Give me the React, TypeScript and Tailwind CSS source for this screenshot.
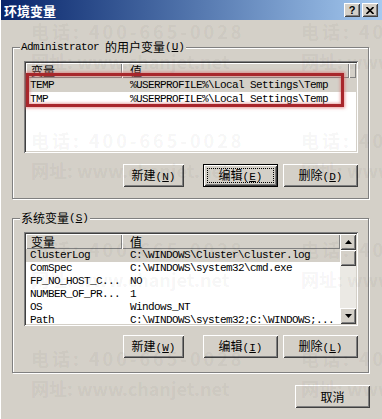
import React from "react";

const cjk = "font-['Noto_Sans_CJK_SC',sans-serif]";
const mono = "font-['Liberation_Mono','Noto_Sans_CJK_SC',monospace] text-[11px] tracking-[-0.6px]";
const raised =
  "shadow-[inset_1px_1px_#ffffff,inset_-1px_-1px_#404040,inset_2px_2px_#d4d0c8,inset_-2px_-2px_#808080]";
const sunken =
  "shadow-[inset_1px_1px_#808080,inset_-1px_-1px_#ffffff,inset_2px_2px_#404040,inset_-2px_-2px_#d4d0c8]";
const etched = "border border-[#808080] shadow-[inset_1px_1px_#ffffff,1px_1px_#ffffff]";
const headCell = "h-full flex items-center bg-[#d4d0c8] shadow-[inset_1px_1px_#ffffff,inset_-1px_-1px_#808080]";

const userVars = [
  { name: "TEMP", value: "%USERPROFILE%\\Local Settings\\Temp" },
  { name: "TMP", value: "%USERPROFILE%\\Local Settings\\Temp" },
];

const sysVars = [
  { name: "ClusterLog", value: "C:\\WINDOWS\\Cluster\\cluster.log" },
  { name: "ComSpec", value: "C:\\WINDOWS\\system32\\cmd.exe" },
  { name: "FP_NO_HOST_C...", value: "NO" },
  { name: "NUMBER_OF_PR...", value: "1" },
  { name: "OS", value: "Windows_NT" },
  { name: "Path", value: "C:\\WINDOWS\\system32;C:\\WINDOWS;..." },
];

const Key = ({ k }: { k: string }) => (
  <span className="font-['Liberation_Mono',monospace] text-[11px]">
    (<span className="underline underline-offset-1">{k}</span>)
  </span>
);

function Btn({ label, k, className = "", focus = false }: { label: string; k?: string; className?: string; focus?: boolean }) {
  const text = (
    <span className={`${cjk} text-[12px] leading-none text-black`}>
      {label}
      {k && <Key k={k} />}
    </span>
  );
  if (focus) {
    return (
      <div className={`h-[23px] flex bg-[#d4d0c8] border border-black ${raised} ${className}`}>
        <div className="flex-1 m-[3px] border border-dotted border-black flex items-center justify-center">{text}</div>
      </div>
    );
  }
  return <div className={`h-[23px] flex items-center justify-center bg-[#d4d0c8] ${raised} ${className}`}>{text}</div>;
}

function Arrow({ up }: { up?: boolean }) {
  return (
    <div className={`w-[16px] h-[16px] flex items-center justify-center bg-[#d4d0c8] ${raised}`}>
      <svg width="7" height="4" viewBox="0 0 7 4">
        <path d={up ? "M3.5 0 L7 4 L0 4 Z" : "M0 0 L7 0 L3.5 4 Z"} fill="#000" />
      </svg>
    </div>
  );
}

function Watermark() {
  const blocks = [0, 1, 2, 3];
  const phone = `${cjk} font-bold text-[18px] tracking-[3px] whitespace-nowrap`;
  const site = `${cjk} font-bold text-[18px] whitespace-nowrap`;
  return (
    <div className="absolute inset-0 pointer-events-none pt-[16px] text-black/[0.055] overflow-hidden">
      {blocks.map((b) => (
        <div key={b} className="h-[109px]">
          <div className="h-[30px] flex items-center pl-[30px]">
            <span className={`w-[270px] shrink-0 ${phone}`}>电话: 400-665-0028</span>
            <span className={phone}>电话: 400-665-0028</span>
          </div>
          <div className="h-[30px] flex items-center pl-[30px]">
            <span className={`w-[270px] shrink-0 ${site}`}>网址: www.chanjet.net</span>
            <span className={site}>网址: www.chanjet.net</span>
          </div>
        </div>
      ))}
    </div>
  );
}

export default function App() {
  return (
    <div className="relative w-[382px] h-[419px] overflow-hidden bg-[#d4d0c8] border-l border-white">
      {/* title bar */}
      <div className="h-[20px] flex items-center justify-between bg-linear-to-r from-[#0a246a] to-[#a6caf0] pl-[3px] pr-[4px]">
        <span className={`${cjk} text-white text-[13px] font-bold leading-none`}>环境变量</span>
        <div className="flex gap-[2px]">
          <div className={`w-[16px] h-[14px] flex items-center justify-center bg-[#d4d0c8] ${raised}`}>
            <span className="font-['Liberation_Sans',sans-serif] font-bold text-[11px] leading-none text-black">?</span>
          </div>
          <div className={`w-[16px] h-[14px] flex items-center justify-center bg-[#d4d0c8] ${raised}`}>
            <svg width="8" height="7" viewBox="0 0 8 7">
              <path d="M0.5 0 L7.5 7 M7.5 0 L0.5 7" stroke="#000" strokeWidth="1.6" />
            </svg>
          </div>
        </div>
      </div>

      <div className="pl-[11px]">
        {/* user variables */}
        <div className={`relative mt-[27px] w-[357px] h-[152px] ${etched} pt-[13px] pl-[11px]`}>
          <div className="absolute left-[7px] top-[-8px] px-[1px] bg-[#d4d0c8] h-[14px] flex items-center text-black">
            <span className="font-['Liberation_Mono',monospace] text-[11px] tracking-[-0.6px]">Administrator&nbsp;</span>
            <span className={`${cjk} text-[12px] leading-none`}>的用户变量</span>
            <Key k="U" />
          </div>
          <div className={`relative w-[334px] h-[92px] bg-white p-[2px] ${sunken}`}>
            <div className="h-[15px] flex">
              <div className={`${headCell} w-[96px] pl-[5px]`}>
                <span className={`${cjk} text-[12px] leading-[14px]`}>变量</span>
              </div>
              <div className={`${headCell} w-[227px] pl-[8px]`}>
                <span className={`${cjk} text-[12px] leading-[14px]`}>值</span>
              </div>
              <div className={`${headCell} flex-1`} />
            </div>
            {userVars.map((v, i) => (
              <div key={v.name} className={`h-[14px] flex items-center text-black ${i === 0 ? "bg-[#d4d0c8]" : ""}`}>
                <span className={`w-[96px] pl-[4px] ${mono}`}>{v.name}</span>
                <span className={`pl-[8px] whitespace-nowrap ${mono}`}>{v.value}</span>
              </div>
            ))}
            <div className="absolute left-[2px] top-[12px] w-[318px] h-[34px] border-[3px] border-[#a8262b] shadow-[0_0_3px_1px_rgba(220,110,110,0.7),inset_0_0_3px_1px_rgba(220,110,110,0.6)]" />
          </div>
          <div className="mt-[11px] flex pl-[99px]">
            <Btn label="新建" k="N" className="w-[61px]" />
            <Btn label="编辑" k="E" className="w-[75px] ml-[19px]" focus />
            <Btn label="删除" k="D" className="w-[75px] ml-[5px]" />
          </div>
        </div>

        {/* system variables */}
        <div className={`relative mt-[19px] w-[357px] h-[155px] ${etched} pt-[13px] pl-[11px]`}>
          <div className="absolute left-[7px] top-[-8px] px-[1px] bg-[#d4d0c8] h-[14px] flex items-center text-black">
            <span className={`${cjk} text-[12px] leading-none`}>系统变量</span>
            <Key k="S" />
          </div>
          <div className={`w-[334px] h-[94px] bg-white p-[2px] flex ${sunken}`}>
            <div className="flex-1 overflow-hidden">
              <div className="h-[15px] flex">
                <div className={`${headCell} w-[96px] pl-[5px]`}>
                  <span className={`${cjk} text-[12px] leading-[14px]`}>变量</span>
                </div>
                <div className={`${headCell} flex-1 pl-[8px]`}>
                  <span className={`${cjk} text-[12px] leading-[14px]`}>值</span>
                </div>
              </div>
              {sysVars.map((v, i) => (
                <div key={v.name} className={`h-[13px] flex items-center text-black ${i === 0 ? "bg-[#d4d0c8]" : ""}`}>
                  <span className={`w-[96px] pl-[4px] whitespace-nowrap ${mono}`}>{v.name}</span>
                  <span className={`pl-[8px] whitespace-nowrap ${mono}`}>{v.value}</span>
                </div>
              ))}
            </div>
            <div className="w-[16px] flex flex-col bg-[#ebe9e4]">
              <Arrow up />
              <div className={`h-[16px] bg-[#d4d0c8] ${raised}`} />
              <div className="flex-1" />
              <Arrow />
            </div>
          </div>
          <div className="mt-[9px] flex pl-[99px]">
            <Btn label="新建" k="W" className="w-[61px]" />
            <Btn label="编辑" k="I" className="w-[75px] ml-[19px]" />
            <Btn label="删除" k="L" className="w-[75px] ml-[5px]" />
          </div>
        </div>

        <div className="mt-[12px] pl-[283px]">
          <Btn label="取消" className="w-[75px]" />
        </div>
      </div>

      <Watermark />
    </div>
  );
}
